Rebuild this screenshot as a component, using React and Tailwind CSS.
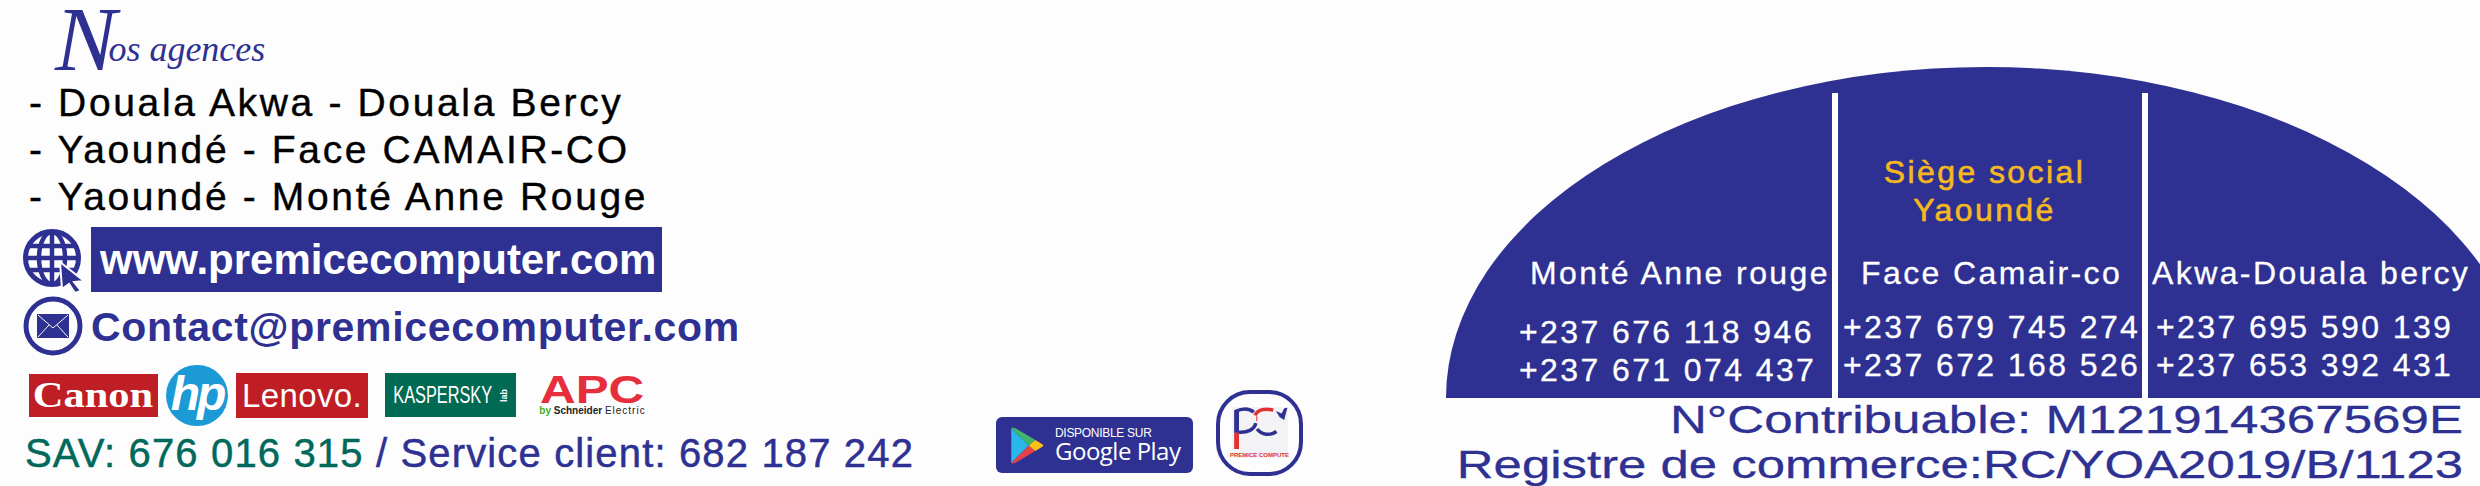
const NAVY = "#2e3192";

function GlobeIcon() {
  return (
    <svg width="62" height="66" viewBox="0 0 62 66" className="shrink-0">
      <circle cx="29" cy="31" r="26.5" fill="none" stroke={NAVY} strokeWidth="5" />
      <ellipse cx="29" cy="31" rx="13" ry="26" fill="none" stroke={NAVY} strokeWidth="4.5" />
      <path d="M29 4V58M5 19H53M2 31H56M5 43H53" fill="none" stroke={NAVY} strokeWidth="4.5" />
      <path d="M37 35L61 54L51 55L58 64L52 66L46 57L39 62Z" fill={NAVY} stroke="#fdfdfe" strokeWidth="2" />
    </svg>
  );
}

function MailIcon() {
  return (
    <svg width="60" height="60" viewBox="0 0 60 60" className="shrink-0">
      <circle cx="30" cy="30" r="27" fill="none" stroke={NAVY} strokeWidth="5" />
      <rect x="14" y="18" width="32" height="24" fill={NAVY} />
      <path d="M15 19L30 32L45 19M15 41L26 29M45 41L34 29" fill="none" stroke="#fdfdfe" strokeWidth="1" />
    </svg>
  );
}

function PlayIcon() {
  return (
    <svg width="34" height="37" viewBox="0 0 36 40" className="shrink-0">
      <path d="M1 1L20 20L1 39Z" fill="#29b6e8" />
      <path d="M1 1Q2 0 5 1L27 14L20 20Z" fill="#3fb56b" />
      <path d="M1 39Q2 40 5 39L27 26L20 20Z" fill="#e8414a" />
      <path d="M27 14L35 19Q36 20 35 21L27 26L20 20Z" fill="#fbc116" />
    </svg>
  );
}

function PcLogo() {
  return (
    <div className="w-[87px] h-[86px] mb-[10px] ml-[23px] shrink-0 border-[4px] border-[#2e3192] rounded-[34px] flex justify-center pt-[13px]">
      <div className="w-[56px] h-[51px] bg-[#f3f3f6] flex flex-col items-center">
        <svg width="56" height="44" viewBox="80 80 170 133">
          <path d="M85 90H100V160H85Z" fill={NAVY} />
          <path d="M85 160H100V210H85Z" fill="#e0322f" />
          <path d="M88 94C110 84 132 84 146 96" fill="none" stroke={NAVY} strokeWidth="11" />
          <path d="M100 158C125 160 148 150 152 130" fill="none" stroke={NAVY} strokeWidth="11" />
          <path d="M150 106C156 90 178 82 206 90" fill="none" stroke="#e0322f" strokeWidth="11" />
          <path d="M156 148C170 166 196 170 216 156" fill="none" stroke={NAVY} strokeWidth="11" />
          <path d="M155 108V124" fill="none" stroke="#e0322f" strokeWidth="3" />
          <path d="M214 92L232 100L240 84L250 82L246 96L240 120L226 112Z" fill={NAVY} />
        </svg>
        <span className="mt-[2px] text-[6px] leading-none font-bold text-[#e0322f] whitespace-nowrap">
          PREMICE COMPUTE
        </span>
      </div>
    </div>
  );
}

function BrandRow() {
  return (
    <div className="flex items-center h-[62px] mt-[8px] ml-[29px]">
      <div className="w-[129px] h-[43px] bg-[#be1e24] overflow-hidden flex items-center justify-center text-white text-[36px] font-bold leading-none font-['Liberation_Serif',serif]">
        <span className="inline-block scale-x-[1.18]">Canon</span>
      </div>
      <div className="w-[62px] h-[61px] ml-[8px] rounded-full overflow-hidden bg-[#1c9ad6] flex items-center justify-center text-white text-[48px] font-bold italic leading-none">
        <span className="-mt-[2px] tracking-[-3px]">hp</span>
      </div>
      <div className="w-[132px] h-[45px] ml-[8px] bg-[#be1e24] flex items-center justify-center text-white text-[33px] leading-none tracking-[0.4px]">
        Lenovo.
      </div>
      <div className="w-[131px] h-[44px] ml-[17px] bg-[#006a53] overflow-hidden flex items-center justify-center text-white text-[24px] leading-none">
        <span className="inline-block whitespace-nowrap scale-x-[0.68] -mx-[20px]">KASPERSKY</span>
        <span className="inline-block text-[9px] font-bold -rotate-90 ml-[2px]">lab</span>
      </div>
      <div className="w-[125px] h-[44px] ml-[14px] flex flex-col items-center justify-center leading-none">
        <span className="inline-block scale-x-[1.3] text-[#e62e3c] text-[38px] font-bold leading-[31px]">APC</span>
        <span className="text-[10px] font-bold text-[#222] whitespace-nowrap">
          <span className="text-[#3dae2b]">by</span> Schneider <span className="font-normal tracking-[1px]">Electric</span>
        </span>
      </div>
    </div>
  );
}

function AgencyColumn({ name, phones, nameClass, phoneClass, pad, children }) {
  return (
    <div className={`flex flex-col justify-end items-start h-full text-[32px] tracking-[2.4px] whitespace-nowrap [-webkit-text-stroke:0.3px] ${pad}`}>
      {children}
      <div className={`leading-[34px] ${nameClass}`}>{name}</div>
      <div className={`leading-[38px] ${phoneClass}`}>
        {phones.map((p) => (
          <div key={p}>{p}</div>
        ))}
      </div>
    </div>
  );
}

export default function App() {
  return (
    <div className="w-[2480px] h-[486px] overflow-hidden bg-[#fdfdfe] flex font-['Liberation_Sans',sans-serif]">
      {/* left column */}
      <div className="w-[996px] shrink-0 flex flex-col">
        <div className="h-[79px] pl-[55px] flex items-end text-[#2e3192] font-['Liberation_Serif',serif] italic leading-none whitespace-nowrap">
          <span className="text-[92px] leading-[79px]">N</span>
          <span className="text-[36px] mb-[12px] -ml-[8px]">os agences</span>
        </div>
        <div className="pl-[29px] text-[39px] leading-[47px] text-black tracking-[2.65px] whitespace-nowrap [-webkit-text-stroke:0.4px]">
          <div>- Douala Akwa - Douala Bercy</div>
          <div>- Yaoundé - Face CAMAIR-CO</div>
          <div>- Yaoundé - Monté Anne Rouge</div>
        </div>
        <div className="flex items-start ml-[23px] mt-[7px] h-[66px]">
          <GlobeIcon />
          <div className="w-[571px] h-[65px] ml-[6px] bg-[#2e3192] text-white text-[42px] font-bold flex items-center pl-[9px] whitespace-nowrap">
            www.premicecomputer.com
          </div>
        </div>
        <div className="flex items-center ml-[23px] mt-[3px] h-[60px]">
          <MailIcon />
          <div className="ml-[8px] pt-[3px] text-[#2e3192] text-[41px] tracking-[0.7px] font-bold whitespace-nowrap">
            Contact@premicecomputer.com
          </div>
        </div>
        <BrandRow />
        <div className="pl-[25px] mt-[4px] text-[40px] leading-[46px] whitespace-nowrap tracking-[1.15px] text-[#2e3192] [-webkit-text-stroke:0.5px]">
          <span className="text-[#00695c]">SAV: 676 016 315</span> / Service client: 682 187 242
        </div>
      </div>

      {/* store badge and logo */}
      <div className="w-[450px] shrink-0 flex items-end">
        <div className="w-[197px] h-[56px] mb-[13px] shrink-0 bg-[#2e3192] rounded-[6px] flex items-center pl-[14px] text-white">
          <PlayIcon />
          <div className="ml-[11px] flex flex-col leading-none">
            <span className="text-[12px] tracking-[-0.3px] whitespace-nowrap">DISPONIBLE SUR</span>
            <span className="text-[24px] -tracking-[0.5px] whitespace-nowrap font-['Open_Sans',sans-serif]">Google Play</span>
          </div>
        </div>
        <PcLogo />
      </div>

      {/* arch and legal lines */}
      <div className="w-[1034px] shrink-0 flex flex-col pt-[67px]">
        <div className="w-[1080px] h-[331px] shrink-0 bg-[#2e3192] rounded-t-[50%_100%] flex items-end text-white">
          <div className="w-[386px] h-[305px] shrink-0 pl-[73px]">
            <AgencyColumn
              name="Monté Anne rouge"
              nameClass="ml-[11px] mb-[23px]"
              phoneClass=""
              pad="pb-[9px]"
              phones={["+237 676 118 946", "+237 671 074 437"]}
            />
          </div>
          <div className="w-[310px] h-[305px] shrink-0 border-l-[6px] border-white pl-[5px]">
            <AgencyColumn
              name="Face Camair-co"
              nameClass="ml-[18px] mb-[18px]"
              phoneClass=""
              pad="pb-[14px]"
              phones={["+237 679 745 274", "+237 672 168 526"]}
            >
              <div className="w-[283px] text-center leading-[38px] text-[#f5b81f] [-webkit-text-stroke:0.6px] mb-[27px]">
                <div>Siège social</div>
                <div>Yaoundé</div>
              </div>
            </AgencyColumn>
          </div>
          <div className="w-[340px] h-[305px] shrink-0 border-l-[6px] border-white pl-[5px]">
            <AgencyColumn
              name="Akwa-Douala bercy"
              nameClass="-ml-[1px] mb-[18px]"
              phoneClass="ml-[3px]"
              pad="pb-[14px]"
              phones={["+237 695 590 139", "+237 653 392 431"]}
            />
          </div>
        </div>
        <div className="pr-[17px] -mt-[1px] text-right text-[#2e3192] text-[39px] leading-[45px] whitespace-nowrap [-webkit-text-stroke:0.3px]">
          <div className="scale-x-[1.31] origin-right">N°Contribuable: M121914367569E</div>
          <div className="scale-x-[1.305] origin-right">Registre de commerce:RC/YOA2019/B/1123</div>
        </div>
      </div>
    </div>
  );
}
